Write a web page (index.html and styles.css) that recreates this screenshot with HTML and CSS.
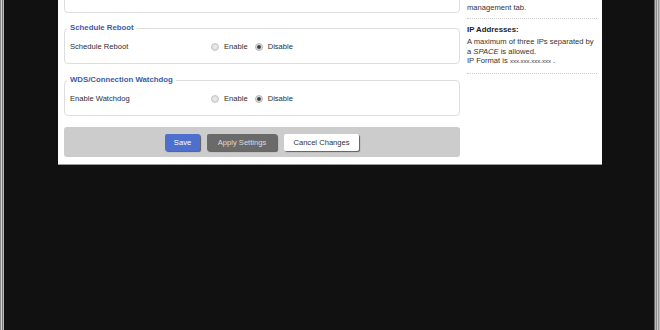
FILE: index.html
```html
<!DOCTYPE html>
<html>
<head>
<meta charset="utf-8">
<title>Keep Alive</title>
<link rel="stylesheet" href="styles.css">
</head>
<body>
<div class="panel">
  <div class="main">
    <fieldset class="group">
      <legend>Remote Access</legend>
      <div class="row">
        <span class="label">Remote Management</span>
        <span class="choices">
          <label class="opt"><input type="radio" name="r1"> Enable</label>
          <label class="opt"><input type="radio" name="r1" checked> Disable</label>
        </span>
      </div>
    </fieldset>
    <fieldset class="group">
      <legend>Schedule Reboot</legend>
      <div class="row">
        <span class="label">Schedule Reboot</span>
        <span class="choices">
          <label class="opt"><input type="radio" name="r2"> Enable</label>
          <label class="opt"><input type="radio" name="r2" checked> Disable</label>
        </span>
      </div>
    </fieldset>
    <fieldset class="group">
      <legend>WDS/Connection Watchdog</legend>
      <div class="row">
        <span class="label">Enable Watchdog</span>
        <span class="choices">
          <label class="opt"><input type="radio" name="r3"> Enable</label>
          <label class="opt"><input type="radio" name="r3" checked> Disable</label>
        </span>
      </div>
    </fieldset>
    <div class="actions">
      <button class="btn btn-save" type="button">Save</button>
      <button class="btn btn-apply" type="button">Apply Settings</button>
      <button class="btn btn-cancel" type="button">Cancel Changes</button>
    </div>
  </div>
  <aside class="help">
    <div class="help-item">
      <h4>Remote Access:</h4>
      <p>Access must be enabled in the<br>management tab.</p>
    </div>
    <div class="help-item">
      <h4>IP Addresses:</h4>
      <p>A maximum of three IPs separated by<br>a <em>SPACE</em> is allowed.<br>IP Format is <span class="fmt">xxx.xxx.xxx.xxx</span> .</p>
    </div>
  </aside>
</div>
</body>
</html>
```

FILE: styles.css
```css
html, body {
  margin: 0;
  padding: 0;
  height: 100%;
}

body {
  background-color: #111111;
  background-image:
    linear-gradient(to right, #8a8a8a 0 1px, #d0d0d0 1px 2px, #7a7a7a 2px 3px, #b4b4b4 3px 4px, transparent 4px),
    linear-gradient(to right, transparent 0 654px, #6a6a6a 654px 655px, #b8b8b8 655px 656px, #8c8c8c 656px 657px, #d0d0d0 657px 658px, #9a9a9a 658px 659px, #c0c0c0 659px 660px);
  background-repeat: no-repeat;
  font-family: "Liberation Sans", Arial, sans-serif;
  font-size: 7.6px;
  color: #333333;
  overflow: hidden;
}

.panel {
  width: 533px;
  margin: -28px auto 0;
  padding: 0 5px 7px 6px;
  background: #ffffff;
  display: flex;
  gap: 7px;
  align-items: flex-start;
  box-shadow: 0 1px 0 #9a9a9a;
}

.main {
  width: 396px;
  flex: none;
}

.group {
  margin: 0 0 11px;
  padding: 9px 6px 11px 5px;
  border: 1px solid #dddddd;
  border-radius: 4px;
}

.group:first-child {
  margin-bottom: 10px;
}

.group legend {
  margin-left: -3px;
  padding: 0 3px;
  font-size: 7.8px;
  line-height: 10px;
  font-weight: bold;
  color: #3b5ca8;
}

.row {
  display: flex;
  align-items: center;
  height: 10px;
  line-height: 10px;
}

.label {
  width: 141px;
  flex: none;
  color: #2e2e2e;
}

.choices {
  display: flex;
  align-items: center;
  gap: 7px;
}

.opt {
  display: flex;
  align-items: center;
  color: #2e2e2e;
}

.opt input {
  -webkit-appearance: none;
  appearance: none;
  width: 8px;
  height: 8px;
  margin: 0 5px 0 0;
  border-radius: 50%;
  border: 1px solid #c4c4c4;
  background: radial-gradient(circle, #ececec 0, #d8d8d8 100%);
  box-sizing: border-box;
}

.opt input:checked {
  border-color: #b4b4b4;
  background: radial-gradient(circle, #3c3c3c 0 1.4px, #9a9a9a 1.9px, #e2e2e2 2.6px, #ebebeb 100%);
}

.actions {
  height: 30px;
  background: #cccccc;
  border-radius: 3px;
  display: flex;
  align-items: center;
  justify-content: center;
  gap: 7px;
}

.btn {
  height: 17px;
  padding: 0;
  border: none;
  border-radius: 2px;
  font-family: "Liberation Sans", Arial, sans-serif;
  font-size: 7.6px;
  box-shadow: 1px 1px 1px rgba(0, 0, 0, 0.55);
  cursor: pointer;
}

.btn-save {
  width: 35px;
  background: #4e70cc;
  color: #ffffff;
}

.btn-apply {
  width: 70px;
  background: #6a6a6a;
  color: #dcdcdc;
}

.btn-cancel {
  width: 75px;
  background: #ffffff;
  color: #333333;
}

.help {
  width: 130px;
  flex: none;
  margin-top: 3px;
}

.help-item {
  padding: 6px 0;
  border-bottom: 1px dotted #cfcfcf;
}

.help-item h4 {
  margin: 0 0 2px;
  font-size: 7.8px;
  line-height: 10px;
  font-weight: bold;
  color: #222222;
}

.help-item p {
  margin: 0;
  line-height: 9.5px;
  color: #333333;
}

.help-item em {
  font-style: italic;
}

.fmt {
  font-size: 6px;
}
```
